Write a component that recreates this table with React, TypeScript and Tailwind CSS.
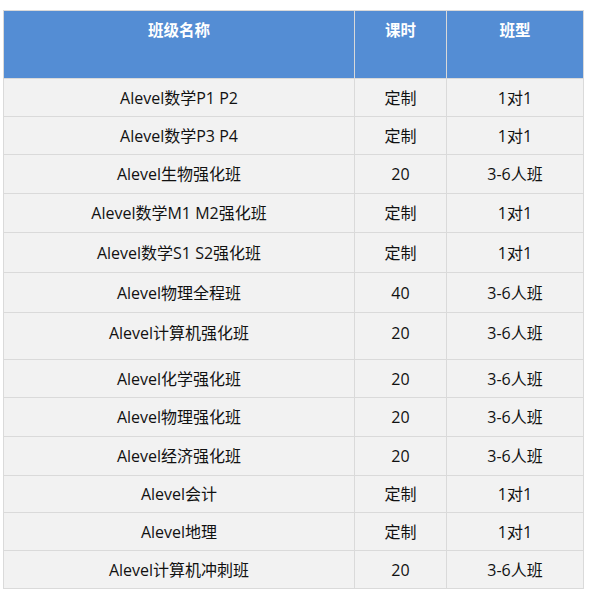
const rows: [string, string, string, number][] = [
  ["Alevel数学P1 P2", "定制", "1对1", 38],
  ["Alevel数学P3 P4", "定制", "1对1", 38],
  ["Alevel生物强化班", "20", "3-6人班", 39],
  ["Alevel数学M1 M2强化班", "定制", "1对1", 39],
  ["Alevel数学S1 S2强化班", "定制", "1对1", 40],
  ["Alevel物理全程班", "40", "3-6人班", 40],
  ["Alevel计算机强化班", "20", "3-6人班", 47],
  ["Alevel化学强化班", "20", "3-6人班", 38],
  ["Alevel物理强化班", "20", "3-6人班", 39],
  ["Alevel经济强化班", "20", "3-6人班", 39],
  ["Alevel会计", "定制", "1对1", 37],
  ["Alevel地理", "定制", "1对1", 38],
  ["Alevel计算机冲刺班", "20", "3-6人班", 38],
];

export default function App() {
  return (
    <div className="min-h-screen bg-white pl-[3px] pt-[10px] font-['Open_Sans','Noto_Sans_CJK_SC',sans-serif] text-[16px] text-[#111]">
      <table className="w-[580px] table-fixed border-collapse">
        <colgroup>
          <col className="w-[351px]" />
          <col className="w-[92px]" />
          <col className="w-[137px]" />
        </colgroup>
        <thead>
          <tr className="bg-[#548dd4] text-white">
            {["班级名称", "课时", "班型"].map((h) => (
              <th
                key={h}
                className="h-[68px] border border-[#d9d9d9] pt-[8px] align-top text-[15.5px] font-bold"
              >
                {h}
              </th>
            ))}
          </tr>
        </thead>
        <tbody>
          {rows.map(([name, hours, type, h]) => {
            const tall = h > 45 ? "pb-[7px]" : "";
            return (
              <tr key={name} className="bg-[#f2f2f2]" style={{ height: h }}>
                <td className={`border border-[#dadada] text-center ${tall}`}>{name}</td>
                <td className={`border border-[#dadada] text-center ${tall}`}>{hours}</td>
                <td className={`border border-[#dadada] text-center ${tall}`}>{type}</td>
              </tr>
            );
          })}
        </tbody>
      </table>
    </div>
  );
}
